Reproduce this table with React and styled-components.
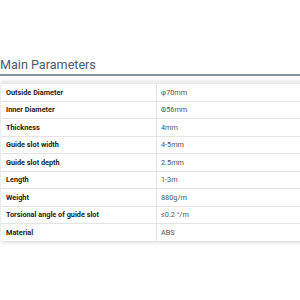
import React from "react";
import styled, { createGlobalStyle } from "styled-components";

const Global = createGlobalStyle`
  html, body { margin: 0; padding: 0; background: #fff; }
  body { font-family: Roboto, "Noto Sans", sans-serif; }
`;

const Page = styled.div`
  width: 300px;
  height: 300px;
  overflow: hidden;
  padding-top: 57px;
  box-sizing: border-box;
`;

const Title = styled.h2`
  margin: 0;
  font-family: Roboto, sans-serif;
  font-weight: 400;
  font-size: 12.6px;
  line-height: 16px;
  color: #4a5b70;
  padding-bottom: 1px;
  border-bottom: 2px solid #8893a0;
`;

const Table = styled.table`
  margin-top: 5px;
  margin-left: 1px;
  width: 320px;
  border-collapse: collapse;
  box-shadow: 0 1px 4px rgba(0, 0, 0, 0.18);
  font-size: 7.3px;
`;

const Row = styled.tr`
  border-top: ${(p) => (p.$first ? "3px solid #ececec" : "1px solid #e4e4e4")};
`;

const Cell = styled.td`
  height: 16.5px;
  padding: 0 0 0 ${(p) => (p.$label ? "5px" : "4px")};
  vertical-align: middle;
  color: ${(p) => (p.$label ? "#222" : "#555")};
  font-weight: ${(p) => (p.$label ? 700 : 400)};
  width: ${(p) => (p.$label ? "150px" : "auto")};
  border-right: ${(p) => (p.$label ? "1px solid #e4e4e4" : "none")};
`;

const rows = [
  ["Outside Diameter", "φ70mm"],
  ["Inner Diameter", "Φ56mm"],
  ["Thickness", "4mm"],
  ["Guide slot width", "4-5mm"],
  ["Guide slot depth", "2.5mm"],
  ["Length", "1-3m"],
  ["Weight", "880g/m"],
  ["Torsional angle of guide slot", "≤0.2 °/m"],
  ["Material", "ABS"],
];

export default function App() {
  return (
    <Page>
      <Global />
      <Title>Main Parameters</Title>
      <Table>
        <tbody>
          {rows.map(([k, v], i) => (
            <Row key={k} $first={i === 0}>
              <Cell $label>{k}</Cell>
              <Cell>{v}</Cell>
            </Row>
          ))}
        </tbody>
      </Table>
    </Page>
  );
}
